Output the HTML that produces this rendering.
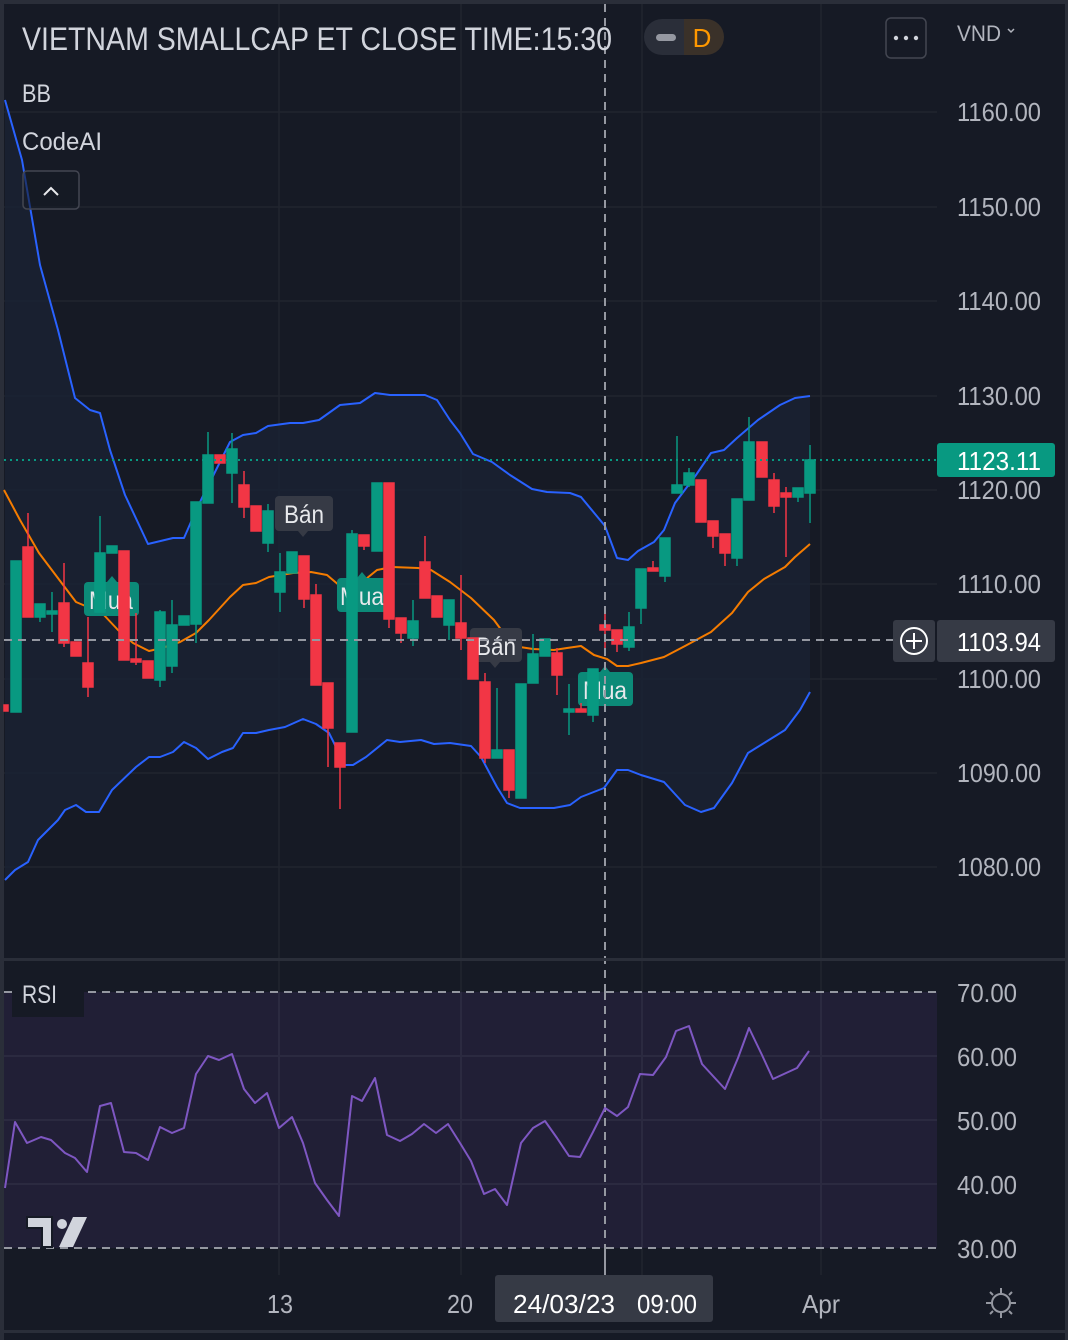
<!DOCTYPE html>
<html><head><meta charset="utf-8"><style>
html,body{margin:0;padding:0;background:#2a2e39;}
svg{display:block;font-family:"Liberation Sans",sans-serif;}
</style></head><body>
<svg width="1068" height="1340" viewBox="0 0 1068 1340" xmlns="http://www.w3.org/2000/svg">
<rect x="0" y="0" width="1068" height="1340" fill="#2a2e39"/>
<rect x="4" y="4" width="1061" height="1326" fill="#161a25"/>
<rect x="4" y="1333" width="1061" height="7" fill="#161a25"/>
<g stroke="#21252f" stroke-width="1.5">
<line x1="279" y1="4" x2="279" y2="1275"/><line x1="461" y1="4" x2="461" y2="1275"/>
<line x1="642" y1="4" x2="642" y2="1275"/><line x1="821" y1="4" x2="821" y2="1275"/>
<line x1="4" y1="112" x2="937" y2="112"/><line x1="4" y1="207" x2="937" y2="207"/>
<line x1="4" y1="301" x2="937" y2="301"/><line x1="4" y1="396" x2="937" y2="396"/>
<line x1="4" y1="490" x2="937" y2="490"/><line x1="4" y1="584" x2="937" y2="584"/>
<line x1="4" y1="679" x2="937" y2="679"/><line x1="4" y1="773" x2="937" y2="773"/>
<line x1="4" y1="867" x2="937" y2="867"/>
</g>
<polygon fill="#1a2233" fill-opacity="0.85" points="5,100 22,160 40,265 58,330 75,398 90,410 100,413 110,450 125,495 148,544 173,538 184,538 191,522 201,500 230,442 243,435 256,433 268,426 290,423 303,423 319,420 340,405 360,403 375,393 390,395 425,395 437,400 450,420 460,433 473,454 492,462 510,475 532,489 547,492 570,493 581,497 605,526 617,558 628,560 638,551 654,542 664,530 675,503 696,475 711,453 724,450 737,438 758,420 780,405 795,398 810,396 810,692 800,710 785,730 748,753 732,783 714,808 701,812 685,805 664,782 641,775 628,770 617,770 604,788 581,797 570,805 554,808 520,808 507,803 497,787 481,757 471,746 450,743 434,744 421,740 400,742 387,740 366,757 353,765 345,765 329,733 316,724 303,719 285,727 269,730 256,733 243,733 233,748 222,752 208,759 196,748 184,742 173,752 160,757 149,757 136,767 112,790 99,812 86,812 76,805 65,810 58,820 48,830 38,840 28,862 15,870 5,880"/>
<g fill="none" stroke-width="2" stroke-linejoin="round">
<polyline stroke="#2962ff" points="5,100 22,160 40,265 58,330 75,398 90,410 100,413 110,450 125,495 148,544 173,538 184,538 191,522 201,500 230,442 243,435 256,433 268,426 290,423 303,423 319,420 340,405 360,403 375,393 390,395 425,395 437,400 450,420 460,433 473,454 492,462 510,475 532,489 547,492 570,493 581,497 605,526 617,558 628,560 638,551 654,542 664,530 675,503 696,475 711,453 724,450 737,438 758,420 780,405 795,398 810,396"/>
<polyline stroke="#2962ff" points="5,880 15,870 28,862 38,840 48,830 58,820 65,810 76,805 86,812 99,812 112,790 136,767 149,757 160,757 173,752 184,742 196,748 208,759 222,752 233,748 243,733 256,733 269,730 285,727 303,719 316,724 329,733 345,765 353,765 366,757 387,740 400,742 421,740 434,744 450,743 471,746 481,757 497,787 507,803 520,808 554,808 570,805 581,797 604,788 617,770 628,770 641,775 664,782 685,805 701,812 714,808 732,783 748,753 785,730 800,710 810,692"/>
<polyline stroke="#f57c00" points="4,490 20,520 39,553 76,602 102,613 118,630 133,643 149,651 162,648 180,642 196,633 209,620 230,597 243,585 256,583 269,577 293,573 311,572 327,575 340,586 361,583 377,570 392,567 418,568 431,570 450,582 471,598 494,620 505,635 520,647 533,649 554,650 567,648 581,646 594,655 607,659 617,666 628,666 641,663 664,657 685,646 711,632 732,613 748,592 764,579 785,567 795,557 810,544"/>
</g>
<g font-size="25" text-anchor="middle">
<rect x="275" y="496" width="58" height="35" rx="4" fill="#363a45"/><polygon points="298,531 308,531 303,537" fill="#363a45"/>
<text x="304" y="523" fill="#e8e9ec" textLength="40" lengthAdjust="spacingAndGlyphs">Bán</text>
<rect x="470" y="628" width="52" height="34" rx="4" fill="#363a45"/><polygon points="490,662 500,662 495,668" fill="#363a45"/>
<text x="496" y="655" fill="#e8e9ec" textLength="40" lengthAdjust="spacingAndGlyphs">Bán</text>
<rect x="84" y="582" width="55" height="34" rx="4" fill="#0c8a78"/><polygon points="107,582 117,582 112,576" fill="#0c8a78"/>
<text x="111" y="609" fill="#e8e9ec" textLength="44" lengthAdjust="spacingAndGlyphs">Mua</text>
<rect x="337" y="578" width="50" height="34" rx="4" fill="#0c8a78"/><polygon points="357,578 367,578 362,572" fill="#0c8a78"/>
<text x="362" y="605" fill="#e8e9ec" textLength="44" lengthAdjust="spacingAndGlyphs">Mua</text>
<rect x="578" y="672" width="55" height="34" rx="4" fill="#0c8a78"/><polygon points="600,672 610,672 605,666" fill="#0c8a78"/>
<text x="605" y="699" fill="#e8e9ec" textLength="44" lengthAdjust="spacingAndGlyphs">Mua</text>
</g>
<g stroke-width="1.5">
<g stroke="#f23645" fill="#f23645">
<rect x="4" y="705" width="4" height="6"/>
<line x1="28" y1="513" x2="28" y2="617"/><rect x="23" y="547" width="10" height="70"/>
<line x1="64" y1="563" x2="64" y2="647"/><rect x="59" y="603" width="10" height="40"/>
<rect x="71" y="642" width="10" height="14"/>
<line x1="88" y1="617" x2="88" y2="697"/><rect x="83" y="663" width="10" height="24"/>
<rect x="119" y="551" width="10" height="109"/>
<line x1="136" y1="613" x2="136" y2="665"/><rect x="131" y="659" width="10" height="3"/>
<rect x="143" y="661" width="10" height="17"/>
<rect x="215" y="455" width="10" height="8"/>
<line x1="244" y1="471" x2="244" y2="518"/><rect x="239" y="485" width="10" height="22"/>
<rect x="251" y="506" width="10" height="25"/>
<line x1="304" y1="556" x2="304" y2="608"/><rect x="299" y="556" width="10" height="43"/>
<line x1="316" y1="584" x2="316" y2="685"/><rect x="311" y="595" width="10" height="90"/>
<line x1="328" y1="683" x2="328" y2="767"/><rect x="323" y="683" width="10" height="45"/>
<line x1="340" y1="743" x2="340" y2="809"/><rect x="335" y="743" width="10" height="24"/>
<line x1="364" y1="535" x2="364" y2="550"/><rect x="359" y="535" width="10" height="11"/>
<line x1="389" y1="483" x2="389" y2="628"/><rect x="384" y="483" width="10" height="136"/>
<line x1="401" y1="618" x2="401" y2="643"/><rect x="396" y="618" width="10" height="15"/>
<line x1="425" y1="536" x2="425" y2="598"/><rect x="420" y="562" width="10" height="36"/>
<rect x="432" y="596" width="10" height="21"/>
<line x1="461" y1="575" x2="461" y2="650"/><rect x="456" y="623" width="10" height="15"/>
<rect x="468" y="638" width="10" height="41"/>
<line x1="485" y1="673" x2="485" y2="763"/><rect x="480" y="682" width="10" height="76"/>
<line x1="509" y1="750" x2="509" y2="798"/><rect x="504" y="750" width="10" height="40"/>
<line x1="557" y1="648" x2="557" y2="695"/><rect x="552" y="653" width="10" height="22"/>
<line x1="581" y1="703" x2="581" y2="712"/><rect x="576" y="709" width="10" height="3"/>
<line x1="605" y1="609" x2="605" y2="652"/><rect x="600" y="625" width="10" height="5"/>
<line x1="617" y1="630" x2="617" y2="652"/><rect x="612" y="630" width="10" height="14"/>
<line x1="653" y1="561" x2="653" y2="571"/><rect x="648" y="568" width="10" height="3"/>
<rect x="696" y="480" width="10" height="42"/>
<line x1="713" y1="521" x2="713" y2="548"/><rect x="708" y="521" width="10" height="15"/>
<line x1="725" y1="534" x2="725" y2="566"/><rect x="720" y="534" width="10" height="19"/>
<rect x="757" y="442" width="10" height="35"/>
<line x1="774" y1="473" x2="774" y2="513"/><rect x="769" y="480" width="10" height="26"/>
<line x1="786" y1="487" x2="786" y2="557"/><rect x="781" y="493" width="10" height="4"/>
</g>
<g stroke="#089981" fill="#089981">
<rect x="11" y="561" width="10" height="151"/>
<line x1="40" y1="604" x2="40" y2="622"/><rect x="35" y="604" width="10" height="13"/>
<line x1="52" y1="592" x2="52" y2="632"/><rect x="47" y="611" width="10" height="3"/>
<line x1="100" y1="516" x2="100" y2="612"/><rect x="95" y="553" width="10" height="59"/>
<rect x="107" y="546" width="10" height="7"/>
<line x1="160" y1="610" x2="160" y2="687"/><rect x="155" y="612" width="10" height="68"/>
<line x1="172" y1="600" x2="172" y2="673"/><rect x="167" y="625" width="10" height="41"/>
<rect x="179" y="616" width="10" height="9"/>
<line x1="196" y1="502" x2="196" y2="643"/><rect x="191" y="502" width="10" height="122"/>
<line x1="208" y1="432" x2="208" y2="503"/><rect x="203" y="455" width="10" height="48"/>
<line x1="232" y1="433" x2="232" y2="503"/><rect x="227" y="449" width="10" height="24"/>
<line x1="268" y1="504" x2="268" y2="552"/><rect x="263" y="511" width="10" height="32"/>
<line x1="280" y1="553" x2="280" y2="612"/><rect x="275" y="572" width="10" height="20"/>
<rect x="287" y="552" width="10" height="21"/>
<line x1="352" y1="530" x2="352" y2="732"/><rect x="347" y="534" width="10" height="198"/>
<rect x="372" y="483" width="10" height="68"/>
<line x1="413" y1="600" x2="413" y2="646"/><rect x="408" y="621" width="10" height="17"/>
<line x1="449" y1="600" x2="449" y2="640"/><rect x="444" y="600" width="10" height="25"/>
<line x1="497" y1="688" x2="497" y2="758"/><rect x="492" y="750" width="10" height="8"/>
<rect x="516" y="684" width="10" height="114"/>
<line x1="533" y1="634" x2="533" y2="683"/><rect x="528" y="654" width="10" height="29"/>
<rect x="540" y="639" width="10" height="17"/>
<line x1="569" y1="684" x2="569" y2="735"/><rect x="564" y="709" width="10" height="3"/>
<line x1="593" y1="669" x2="593" y2="722"/><rect x="588" y="669" width="10" height="46"/>
<line x1="629" y1="612" x2="629" y2="651"/><rect x="624" y="627" width="10" height="20"/>
<line x1="641" y1="569" x2="641" y2="624"/><rect x="636" y="569" width="10" height="39"/>
<line x1="665" y1="538" x2="665" y2="582"/><rect x="660" y="538" width="10" height="38"/>
<line x1="677" y1="436" x2="677" y2="493"/><rect x="672" y="485" width="10" height="8"/>
<line x1="689" y1="468" x2="689" y2="487"/><rect x="684" y="473" width="10" height="12"/>
<line x1="737" y1="499" x2="737" y2="566"/><rect x="732" y="499" width="10" height="59"/>
<line x1="749" y1="417" x2="749" y2="500"/><rect x="744" y="442" width="10" height="58"/>
<line x1="798" y1="488" x2="798" y2="502"/><rect x="793" y="488" width="10" height="9"/>
<line x1="810" y1="445" x2="810" y2="523"/><rect x="805" y="460" width="10" height="33"/>
</g>
</g>
<line x1="4" y1="460" x2="937" y2="460" stroke="#089981" stroke-width="2" stroke-dasharray="2,4"/>
<line x1="4" y1="640" x2="893" y2="640" stroke="#9598a1" stroke-width="2" stroke-dasharray="8,6"/>
<line x1="605" y1="4" x2="605" y2="1275" stroke="#9598a1" stroke-width="2" stroke-dasharray="8,6"/>
<text x="22" y="50" font-size="32" fill="#d1d4dc" textLength="590" lengthAdjust="spacingAndGlyphs">VIETNAM SMALLCAP ET CLOSE TIME:15:30</text>
<path d="M662,19 h22 v36 h-22 a18,18 0 0 1 0,-36z" fill="#2a2e39"/>
<path d="M684,19 h22 a18,18 0 0 1 0,36 h-22z" fill="#3a3129"/>
<rect x="656" y="34" width="20" height="7" rx="3.5" fill="#9598a1"/>
<text x="702" y="47" font-size="26" fill="#ff9800" text-anchor="middle">D</text>
<rect x="886" y="18" width="40" height="40" rx="5" fill="#161a25" stroke="#434651" stroke-width="1.5"/>
<circle cx="896" cy="38" r="2.2" fill="#d1d4dc"/><circle cx="906" cy="38" r="2.2" fill="#d1d4dc"/><circle cx="916" cy="38" r="2.2" fill="#d1d4dc"/>
<text x="957" y="41" font-size="22" fill="#b2b5be" textLength="44" lengthAdjust="spacingAndGlyphs">VND</text>
<path d="M1008,29 l3,3 l3,-3" fill="none" stroke="#b2b5be" stroke-width="1.5"/>
<text x="22" y="102" font-size="25" fill="#d1d4dc" textLength="29" lengthAdjust="spacingAndGlyphs">BB</text>
<text x="22" y="150" font-size="25" fill="#d1d4dc" textLength="80" lengthAdjust="spacingAndGlyphs">CodeAI</text>
<rect x="23" y="171" width="56" height="38" rx="4" fill="#161a25" fill-opacity="0.6" stroke="#434651" stroke-width="1.5"/>
<path d="M44,195 l7,-7 l7,7" fill="none" stroke="#e8e9ec" stroke-width="2"/>
<g font-size="26" fill="#b2b5be">
<text x="957" y="121" textLength="84" lengthAdjust="spacingAndGlyphs">1160.00</text>
<text x="957" y="216" textLength="84" lengthAdjust="spacingAndGlyphs">1150.00</text>
<text x="957" y="310" textLength="84" lengthAdjust="spacingAndGlyphs">1140.00</text>
<text x="957" y="405" textLength="84" lengthAdjust="spacingAndGlyphs">1130.00</text>
<text x="957" y="499" textLength="84" lengthAdjust="spacingAndGlyphs">1120.00</text>
<text x="957" y="593" textLength="84" lengthAdjust="spacingAndGlyphs">1110.00</text>
<text x="957" y="688" textLength="84" lengthAdjust="spacingAndGlyphs">1100.00</text>
<text x="957" y="782" textLength="84" lengthAdjust="spacingAndGlyphs">1090.00</text>
<text x="957" y="876" textLength="84" lengthAdjust="spacingAndGlyphs">1080.00</text>
<text x="957" y="1002" textLength="60" lengthAdjust="spacingAndGlyphs">70.00</text>
<text x="957" y="1066" textLength="60" lengthAdjust="spacingAndGlyphs">60.00</text>
<text x="957" y="1130" textLength="60" lengthAdjust="spacingAndGlyphs">50.00</text>
<text x="957" y="1194" textLength="60" lengthAdjust="spacingAndGlyphs">40.00</text>
<text x="957" y="1258" textLength="60" lengthAdjust="spacingAndGlyphs">30.00</text>
</g>
<rect x="937" y="443" width="118" height="34" rx="3" fill="#089981"/>
<text x="957" y="470" font-size="26" fill="#ffffff" textLength="84" lengthAdjust="spacingAndGlyphs">1123.11</text>
<rect x="893" y="620" width="42" height="42" rx="3" fill="#363a45"/>
<circle cx="914" cy="641" r="13" fill="none" stroke="#ffffff" stroke-width="2"/>
<path d="M914,633 v16 M906,641 h16" stroke="#ffffff" stroke-width="2"/>
<rect x="937" y="620" width="118" height="42" rx="3" fill="#363a45"/>
<text x="957" y="651" font-size="26" fill="#ffffff" textLength="84" lengthAdjust="spacingAndGlyphs">1103.94</text>
<rect x="4" y="958" width="1061" height="3" fill="#2a2e39"/>
<rect x="4" y="992" width="933" height="256" fill="#211f36"/>
<g stroke="#2b2a40" stroke-width="2">
<line x1="4" y1="1056" x2="937" y2="1056"/><line x1="4" y1="1120" x2="937" y2="1120"/><line x1="4" y1="1184" x2="937" y2="1184"/>
<line x1="279" y1="992" x2="279" y2="1248"/><line x1="461" y1="992" x2="461" y2="1248"/><line x1="642" y1="992" x2="642" y2="1248"/><line x1="821" y1="992" x2="821" y2="1248"/>
</g>
<line x1="4" y1="992" x2="937" y2="992" stroke="#9598a1" stroke-width="2" stroke-dasharray="8,6"/>
<line x1="4" y1="1248" x2="937" y2="1248" stroke="#9598a1" stroke-width="2" stroke-dasharray="8,6"/>
<line x1="605" y1="992" x2="605" y2="1275" stroke="#9598a1" stroke-width="2" stroke-dasharray="8,6"/>
<rect x="12" y="980" width="72" height="37" fill="#161a25"/>
<text x="22" y="1003" font-size="25" fill="#d1d4dc" textLength="35" lengthAdjust="spacingAndGlyphs">RSI</text>
<polyline fill="none" stroke="#7e57c2" stroke-width="2" stroke-linejoin="round" points="5,1188 15,1122 27,1143 41,1137 51,1140 65,1153 75,1158 87,1172 100,1106 111,1103 124,1152 136,1153 148,1160 160,1127 172,1133 184,1128 196,1074 208,1056 219,1060 232,1054 244,1089 255,1103 267,1093 279,1128 292,1117 303,1143 315,1183 327,1200 339,1216 352,1096 362,1101 375,1078 387,1135 400,1141 412,1134 424,1124 436,1133 448,1124 460,1143 471,1161 484,1194 495,1189 507,1205 521,1143 533,1128 545,1121 557,1138 569,1156 580,1157 593,1132 605,1108 617,1116 628,1107 640,1074 653,1075 666,1057 676,1031 689,1026 702,1064 713,1076 725,1089 738,1058 749,1028 762,1055 773,1079 797,1068 809,1051"/>
<path d="M27,1217 h25 v30 h-10 v-19 h-15z" fill="#d1d4dc" stroke="#161a25" stroke-width="2"/>
<circle cx="62" cy="1224" r="5" fill="#d1d4dc"/>
<path d="M73,1217 h14 l-14,30 h-14z" fill="#d1d4dc"/>
<g font-size="26" fill="#b2b5be" text-anchor="middle">
<text x="280" y="1313" textLength="26" lengthAdjust="spacingAndGlyphs">13</text>
<text x="460" y="1313" textLength="26" lengthAdjust="spacingAndGlyphs">20</text>
<text x="821" y="1313" textLength="38" lengthAdjust="spacingAndGlyphs">Apr</text>
</g>
<rect x="495" y="1275" width="218" height="47" rx="3" fill="#363a45"/>
<text x="513" y="1313" font-size="26" fill="#ffffff" textLength="102" lengthAdjust="spacingAndGlyphs">24/03/23</text>
<text x="637" y="1313" font-size="26" fill="#ffffff" textLength="60" lengthAdjust="spacingAndGlyphs">09:00</text>
<g stroke="#9598a1" stroke-width="2" fill="none">
<circle cx="1001" cy="1303" r="9"/>
<path d="M1001,1288 v5 M1001,1313 v5 M986,1303 h5 M1011,1303 h5 M990,1292 l3,3 M1009,1311 l3,3 M1012,1292 l-3,3 M993,1311 l-3,3"/>
</g>
<rect x="4" y="1330" width="1061" height="3" fill="#2a2e39"/>
</svg>
</body></html>
